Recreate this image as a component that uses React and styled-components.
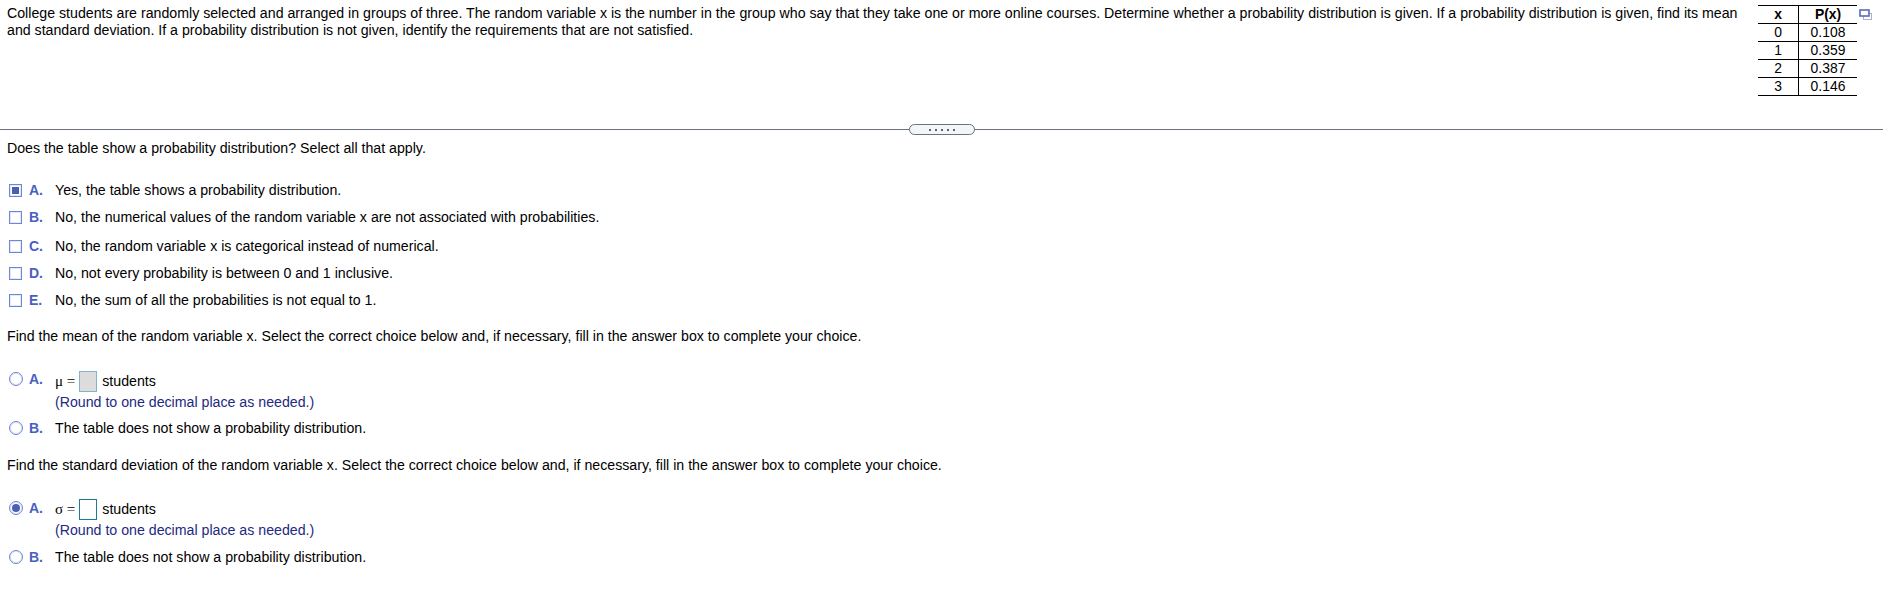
import React from "react";
import styled, { createGlobalStyle } from "styled-components";

const Global = createGlobalStyle`
    html, body {
        margin: 0;
        padding: 0;
        background: #fff;
    }
    body {
        font-family: "Liberation Sans", Arial, sans-serif;
        font-size: 14.18px;
        color: #000;
    }
`;

const Page = styled.div`
    width: 1889px;
    height: 616px;
    overflow: hidden;
`;

const Top = styled.div`
    height: 129px;
    display: flex;
    justify-content: space-between;
    padding: 5px 0 0 7px;
    box-sizing: border-box;
`;

const Intro = styled.p`
    margin: 0;
    width: 1740px;
    line-height: 17px;
`;

const TableWrap = styled.div`
    display: flex;
    align-items: flex-start;
    width: 131px;
    flex-shrink: 0;
`;

const Table = styled.table`
    border-collapse: collapse;
    width: 99px;
    table-layout: fixed;
    border-top: 1px solid #000;
    border-bottom: 1px solid #000;

    & th, & td {
        height: 16px;
        padding: 0 0 1px;
        text-align: center;
        font-size: 13.9px;
        line-height: 15px;
        border-bottom: 1px solid #000;
    }
    & th:first-child, & td:first-child {
        width: 40px;
        border-right: 1px solid #000;
    }
`;

const CopyIcon = styled.svg`
    width: 14px;
    height: 12px;
    margin: 4px 0 0 2px;
`;

const Divider = styled.div`
    width: 1883px;
    height: 1px;
    background: #6a7280;
    display: flex;
    justify-content: center;
    align-items: center;
`;

const Pill = styled.div`
    width: 64px;
    height: 9px;
    border: 1px solid #6a7280;
    border-radius: 6px;
    background: #f3f5f8;
    display: flex;
    align-items: center;
    justify-content: center;
    gap: 4px;
`;

const Dot = styled.span`
    width: 2px;
    height: 2px;
    background: #5c6470;
`;

const Body = styled.div`
    padding: 0 7px;
`;

const Prompt = styled.p`
    margin: 0;
    line-height: 17px;
    padding-top: ${(p) => p.$top}px;
`;

const Options = styled.div`
    display: flex;
    flex-direction: column;
    padding-top: ${(p) => p.$top}px;
`;

const Option = styled.div`
    display: flex;
    align-items: flex-start;
    height: ${(p) => p.$h}px;
`;

const Check = styled.span`
    width: 11px;
    height: 11px;
    margin: 2px 7px 0 2px;
    border: 1px solid #6f86d6;
    background: #fff;
    flex-shrink: 0;
    display: flex;
    align-items: center;
    justify-content: center;
    box-shadow: inset 0 0 0 1px #e4e9f8;

    &::after {
        content: "";
        display: ${(p) => (p.$on ? "block" : "none")};
        width: 7px;
        height: 7px;
        background: #4a5fb0;
    }
`;

const Radio = styled.span`
    width: 12px;
    height: 12px;
    margin: 1px 6px 0 2px;
    border: 1px solid #6f86d6;
    border-radius: 50%;
    background: #fff;
    flex-shrink: 0;
    display: flex;
    align-items: center;
    justify-content: center;
    box-shadow: inset 0 0 0 1px #dfe5f7;

    &::after {
        content: "";
        display: ${(p) => (p.$on ? "block" : "none")};
        width: 8px;
        height: 8px;
        border-radius: 50%;
        background: #4a5fb0;
    }
`;

const Letter = styled.span`
    width: 26px;
    flex-shrink: 0;
    font-weight: bold;
    font-size: 14px;
    color: #4a5fc0;
    line-height: 17px;
`;

const Label = styled.span`
    line-height: 17px;
`;

const Answer = styled.div`
    display: flex;
    align-items: center;
    height: 22px;
    margin-top: ${(p) => p.$top}px;
`;

const Symbol = styled.span`
    font-family: "Liberation Serif", "Times New Roman", serif;
    font-size: 15px;
    margin-right: 4px;
`;

const Blank = styled.span`
    width: 16px;
    height: 19px;
    margin-right: 5px;
    border: 1px solid ${(p) => (p.$active ? "#1f7a99" : "#7fb5cc")};
    background: ${(p) => (p.$active ? "#fff" : "#dcdcdc")};
`;

const Hint = styled.div`
    line-height: 17px;
    color: #1c2a80;
    padding-top: 2px;
`;

const checks = [
    ["A.", "Yes, the table shows a probability distribution.", true, 27],
    ["B.", "No, the numerical values of the random variable x are not associated with probabilities.", false, 29],
    ["C.", "No, the random variable x is categorical instead of numerical.", false, 27],
    ["D.", "No, not every probability is between 0 and 1 inclusive.", false, 27],
    ["E.", "No, the sum of all the probabilities is not equal to 1.", false, 27],
];

const rows = [
    ["0", "0.108"],
    ["1", "0.359"],
    ["2", "0.387"],
    ["3", "0.146"],
];

const Choice = ({ symbol, active, top }) => (
    <Options $top={top}>
        <Option $h={49}>
            <Radio $on={active} />
            <Letter>A.</Letter>
            <div>
                <Answer $top={active ? -2 : -1}>
                    <Symbol>{symbol} =</Symbol>
                    <Blank $active={active} />
                    <span>students</span>
                </Answer>
                <Hint>(Round to one decimal place as needed.)</Hint>
            </div>
        </Option>
        <Option $h={17}>
            <Radio />
            <Letter>B.</Letter>
            <Label>The table does not show a probability distribution.</Label>
        </Option>
    </Options>
);

const App = () => {
    return (
        <Page>
            <Global />
            <Top>
                <Intro>
                    College students are randomly selected and arranged in groups of three. The random variable x is the number in the group who say that they take one or more online courses. Determine whether a probability distribution is given. If a probability distribution is given, find its mean and standard deviation. If a probability distribution is not given, identify the requirements that are not satisfied.
                </Intro>
                <TableWrap>
                    <Table>
                        <thead>
                            <tr>
                                <th>x</th>
                                <th>P(x)</th>
                            </tr>
                        </thead>
                        <tbody>
                            {rows.map(([x, p]) => (
                                <tr key={x}>
                                    <td>{x}</td>
                                    <td>{p}</td>
                                </tr>
                            ))}
                        </tbody>
                    </Table>
                    <CopyIcon viewBox="0 0 14 12">
                        <rect x="4.5" y="4.5" width="8" height="6" fill="#fff" stroke="#a9b1d6" />
                        <rect x="1" y="1" width="9" height="6" fill="#fff" stroke="#5b6bb5" strokeWidth="1.6" />
                    </CopyIcon>
                </TableWrap>
            </Top>
            <Divider>
                <Pill>
                    <Dot />
                    <Dot />
                    <Dot />
                    <Dot />
                    <Dot />
                </Pill>
            </Divider>
            <Body>
                <Prompt $top={10}>Does the table show a probability distribution? Select all that apply.</Prompt>
                <Options $top={25}>
                    {checks.map(([letter, text, on, h]) => (
                        <Option key={letter} $h={h}>
                            <Check $on={on} />
                            <Letter>{letter}</Letter>
                            <Label>{text}</Label>
                        </Option>
                    ))}
                </Options>
                <Prompt $top={9}>Find the mean of the random variable x. Select the correct choice below and, if necessary, fill in the answer box to complete your choice.</Prompt>
                <Choice symbol="μ" top={26} />
                <Prompt $top={20}>Find the standard deviation of the random variable x. Select the correct choice below and, if necessary, fill in the answer box to complete your choice.</Prompt>
                <Choice symbol="σ" active top={26} />
            </Body>
        </Page>
    );
};

export default App;
